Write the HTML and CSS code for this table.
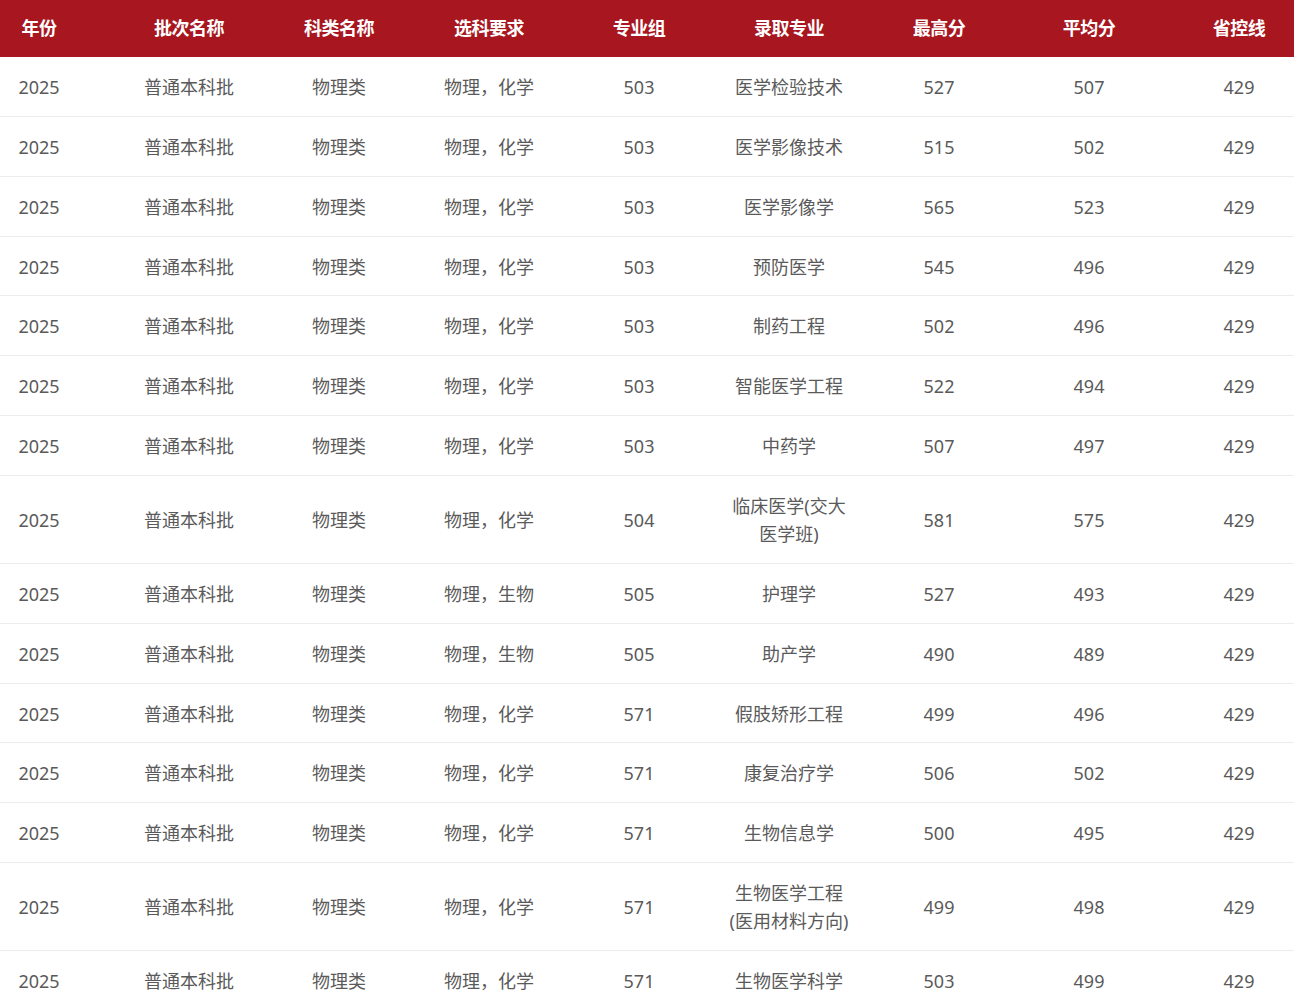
FILE: index.html
```html
<!DOCTYPE html>
<html lang="zh-CN">
<head>
<meta charset="utf-8">
<title>录取分数</title>
<link rel="stylesheet" href="styles.css">
</head>
<body>
<div class="wrap">
<table class="score-table">
<colgroup>
<col class="c-year"><col class="c"><col class="c"><col class="c"><col class="c"><col class="c"><col class="c"><col class="c"><col class="c">
</colgroup>
<thead>
<tr><th class="first">年份</th><th>批次名称</th><th>科类名称</th><th>选科要求</th><th>专业组</th><th>录取专业</th><th>最高分</th><th>平均分</th><th>省控线</th></tr>
</thead>
<tbody>
<tr><td class="first">2025</td><td>普通本科批</td><td>物理类</td><td>物理，化学</td><td>503</td><td>医学检验技术</td><td>527</td><td>507</td><td>429</td></tr>
<tr><td class="first">2025</td><td>普通本科批</td><td>物理类</td><td>物理，化学</td><td>503</td><td>医学影像技术</td><td>515</td><td>502</td><td>429</td></tr>
<tr><td class="first">2025</td><td>普通本科批</td><td>物理类</td><td>物理，化学</td><td>503</td><td>医学影像学</td><td>565</td><td>523</td><td>429</td></tr>
<tr><td class="first">2025</td><td>普通本科批</td><td>物理类</td><td>物理，化学</td><td>503</td><td>预防医学</td><td>545</td><td>496</td><td>429</td></tr>
<tr><td class="first">2025</td><td>普通本科批</td><td>物理类</td><td>物理，化学</td><td>503</td><td>制药工程</td><td>502</td><td>496</td><td>429</td></tr>
<tr><td class="first">2025</td><td>普通本科批</td><td>物理类</td><td>物理，化学</td><td>503</td><td>智能医学工程</td><td>522</td><td>494</td><td>429</td></tr>
<tr><td class="first">2025</td><td>普通本科批</td><td>物理类</td><td>物理，化学</td><td>503</td><td>中药学</td><td>507</td><td>497</td><td>429</td></tr>
<tr><td class="first">2025</td><td>普通本科批</td><td>物理类</td><td>物理，化学</td><td>504</td><td>临床医学(交大医学班)</td><td>581</td><td>575</td><td>429</td></tr>
<tr><td class="first">2025</td><td>普通本科批</td><td>物理类</td><td>物理，生物</td><td>505</td><td>护理学</td><td>527</td><td>493</td><td>429</td></tr>
<tr><td class="first">2025</td><td>普通本科批</td><td>物理类</td><td>物理，生物</td><td>505</td><td>助产学</td><td>490</td><td>489</td><td>429</td></tr>
<tr><td class="first">2025</td><td>普通本科批</td><td>物理类</td><td>物理，化学</td><td>571</td><td>假肢矫形工程</td><td>499</td><td>496</td><td>429</td></tr>
<tr><td class="first">2025</td><td>普通本科批</td><td>物理类</td><td>物理，化学</td><td>571</td><td>康复治疗学</td><td>506</td><td>502</td><td>429</td></tr>
<tr><td class="first">2025</td><td>普通本科批</td><td>物理类</td><td>物理，化学</td><td>571</td><td>生物信息学</td><td>500</td><td>495</td><td>429</td></tr>
<tr><td class="first">2025</td><td>普通本科批</td><td>物理类</td><td>物理，化学</td><td>571</td><td>生物医学工程(医用材料方向)</td><td>499</td><td>498</td><td>429</td></tr>
<tr><td class="first">2025</td><td>普通本科批</td><td>物理类</td><td>物理，化学</td><td>571</td><td>生物医学科学</td><td>503</td><td>499</td><td>429</td></tr>
</tbody>
</table>
</div>
</body>
</html>
```
FILE: styles.css
```css
html, body {
  margin: 0;
  padding: 0;
  background: #ffffff;
  overflow: hidden;
}
body {
  font-family: "Noto Sans", "Noto Sans CJK SC", sans-serif;
}
.wrap {
  width: 1294px;
  overflow: hidden;
}
.score-table {
  width: 1314px;
  table-layout: fixed;
  border-collapse: collapse;
  border-spacing: 0;
}
.c-year { width: 114px; }
.c { width: 150px; }
.score-table th {
  background: #a8161f;
  color: #ffffff;
  font-weight: 700;
  font-size: 18px;
  height: 57px;
  padding: 0 13px 3px;
  box-sizing: border-box;
  text-align: center;
  vertical-align: middle;
  letter-spacing: -0.5px;
}
.score-table td {
  color: #5a5a5a;
  font-size: 18px;
  line-height: 28px;
  padding: 16px 13px 14.86px;
  text-align: center;
  vertical-align: middle;
  border-bottom: 1px solid #ebebf0;
}
.score-table .first {
  padding-left: 0;
  padding-right: 36px;
}
```
